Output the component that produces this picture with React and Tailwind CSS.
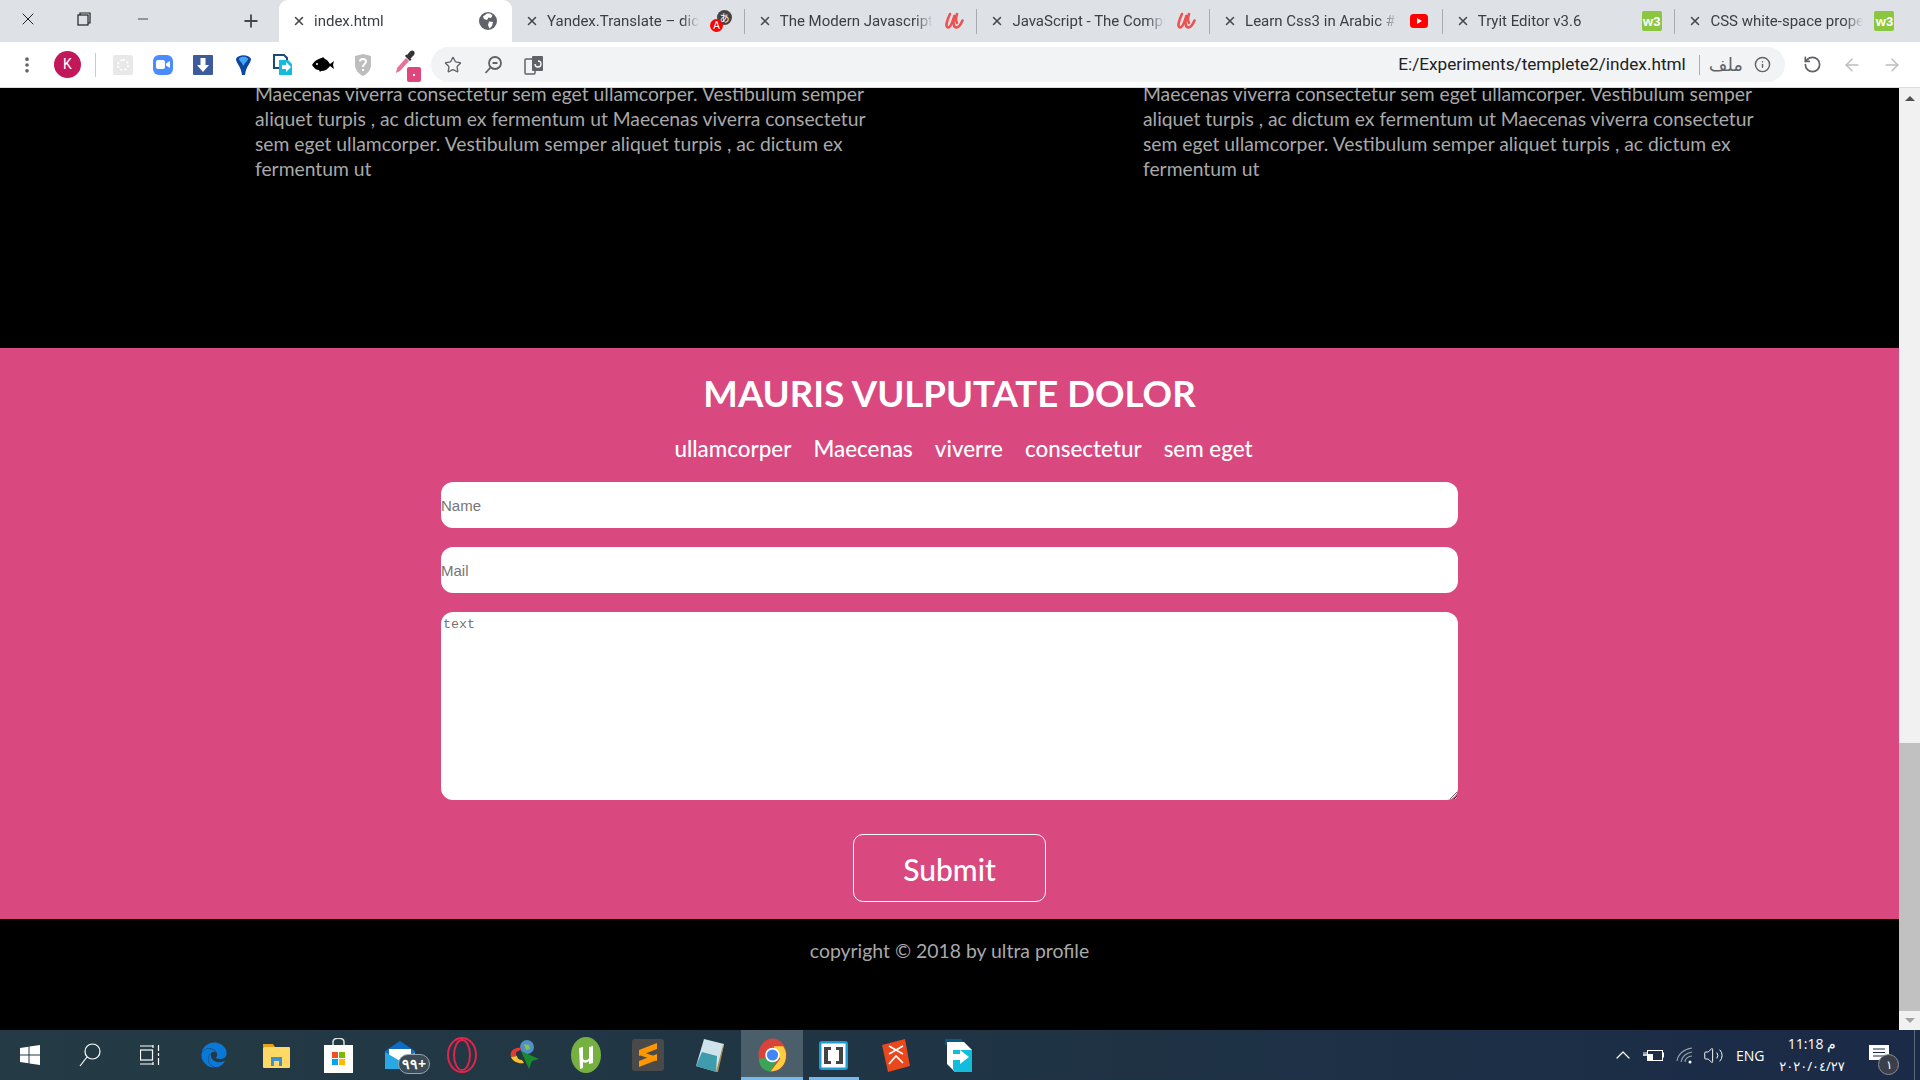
import { useState } from 'react';
import { X, Plus, Minus, Star, RotateCw, ArrowLeft, ArrowRight, Info, EllipsisVertical, ChevronUp, Volume2 } from 'lucide-react';
import { FaEdge } from 'react-icons/fa';

const bodyText =
  'Maecenas viverra consectetur sem eget ullamcorper. Vestibulum semper aliquet turpis , ac dictum ex fermentum ut Maecenas viverra consectetur sem eget ullamcorper. Vestibulum semper aliquet turpis , ac dictum ex fermentum ut';

function UdemyIcon() {
  return (
    <svg width="20" height="18" viewBox="0 0 20 18" fill="none" stroke="#ec5252" strokeWidth="2.6" strokeLinecap="round">
      <path d="M6 2C3 8 1 15 4 15.500C7 16 9 8 10.500 4" />
      <path d="M10.500 4C9 9 9 15 12 15.500C15 16 17 12 18.500 8.500" />
      <path d="M13 2C11.500 6 12 9 13 11" />
    </svg>
  );
}

function W3Icon() {
  return (
    <div className="w-[20px] h-[20px] bg-[#8cc63f] rounded-[2px] flex items-end justify-center text-white text-[13px] font-bold leading-[18px] font-['Liberation_Sans',sans-serif]">
      w3
    </div>
  );
}

function YoutubeIcon() {
  return (
    <svg width="18" height="14" viewBox="0 0 18 14">
      <rect width="18" height="14" rx="3.500" fill="#f00" />
      <path d="M7 4l5 3-5 3z" fill="#fff" />
    </svg>
  );
}

function GlobeIcon() {
  return (
    <svg width="18" height="18" viewBox="0 0 18 18">
      <circle cx="9" cy="9" r="9" fill="#5f6368" />
      <path d="M8 1.500L11 1.500L13.500 3.500L12 6L9.500 5.500L8 8L5 7L4 4.500z M10 9.500L14 10L13 14L10.500 16.500L9 13z" fill="#fff" />
    </svg>
  );
}

function TranslateFavicon() {
  return (
    <div className="relative w-[22px] h-[22px]">
      <div className="absolute right-0 top-0 w-[15px] h-[15px] rounded-full bg-[#444] text-white text-[10px] leading-[15px] text-center font-['Noto_Sans_CJK_SC',sans-serif]">
        あ
      </div>
      <div className="absolute left-0 bottom-0 w-[13px] h-[13px] rounded-full bg-[#f00] text-white text-[10px] leading-[13px] text-center font-['Liberation_Sans',sans-serif]">
        A
      </div>
    </div>
  );
}

const tabs = [
  { title: 'Yandex.Translate – dictionary', icon: <TranslateFavicon /> },
  { title: 'The Modern Javascript Bootcamp', icon: <UdemyIcon /> },
  { title: 'JavaScript - The Complete Guide', icon: <UdemyIcon /> },
  { title: 'Learn Css3 in Arabic #1 - YouTube', icon: <YoutubeIcon /> },
  { title: 'Tryit Editor v3.6', icon: <W3Icon /> },
  { title: 'CSS white-space property', icon: <W3Icon /> },
];

function Tab({ title, icon, active, last }) {
  return (
    <div
      className={
        active
          ? 'relative w-[233px] h-[42px] bg-white rounded-t-[9px] flex items-center pl-[13px] shrink-0'
          : 'relative w-[232.700px] h-[42px] flex items-center pl-[13px] shrink-0'
      }
    >
      <X size={14} strokeWidth={2.6} className="text-[#45484c] shrink-0" />
      <span className="ml-[8px] w-[153px] overflow-hidden whitespace-nowrap text-[15px] text-[#3c4043] font-['Roboto',sans-serif] [mask-image:linear-gradient(to_right,black_88%,transparent)]">
        {title}
      </span>
      <div className="w-[42px] flex justify-center shrink-0">{icon}</div>
      {!active && !last && <div className="absolute right-0 top-[9px] w-px h-[25px] bg-[#a8abaf]" />}
    </div>
  );
}

function TabStrip() {
  return (
    <div className="h-[42px] bg-[#dee1e6] flex shrink-0">
      <div className="w-[56px] flex items-center justify-center -mt-[4px]">
        <X size={20} strokeWidth={1.2} className="text-[#222]" />
      </div>
      <div className="w-[56px] flex items-center justify-center -mt-[4px]">
        <svg width="14" height="14" viewBox="0 0 14 14" fill="none" stroke="#222" strokeWidth="1.200">
          <rect x="1" y="3" width="10" height="10" fill="#dee1e6" />
          <path d="M3 3V1h10v10h-2" />
        </svg>
      </div>
      <div className="w-[62px] flex items-center justify-center -mt-[4px]">
        <Minus size={16} strokeWidth={1.2} className="text-[#222]" />
      </div>
      <div className="w-[56px]" />
      <div className="w-[42px] flex items-center justify-center">
        <Plus size={20} strokeWidth={2.2} className="text-[#45484c]" />
      </div>
      <div className="w-[7px]" />
      <Tab title="index.html" icon={<GlobeIcon />} active />
      {tabs.map((t, i) => (
        <Tab key={t.title} title={t.title} icon={t.icon} last={i === tabs.length - 1} />
      ))}
    </div>
  );
}

function ExtBox({ children }) {
  return <div className="w-[40px] h-full flex items-center justify-center shrink-0">{children}</div>;
}

function Toolbar() {
  return (
    <div className="h-[45px] bg-white flex items-center shrink-0">
      <div className="w-[54px] h-full flex items-center justify-center shrink-0">
        <EllipsisVertical size={20} strokeWidth={2.4} className="text-[#5f6368]" />
      </div>
      <div className="w-[27px] h-[27px] rounded-full bg-[#c2185b] text-white text-[14px] flex items-center justify-center shrink-0 font-['Roboto',sans-serif]">
        K
      </div>
      <div className="ml-[14px] w-px h-[24px] bg-[#c8cacc] shrink-0" />
      <div className="ml-[7px] flex h-full">
        <ExtBox>
          <div className="w-[20px] h-[20px] bg-[#e8e8e8] rounded-[2px] flex items-center justify-center">
            <div className="w-[12px] h-[12px] border-2 border-dotted border-[#fff] rounded-full" />
          </div>
        </ExtBox>
        <ExtBox>
          <div className="w-[20px] h-[20px] bg-[#4a8cff] rounded-[6px] flex items-center justify-center">
            <svg width="14" height="9" viewBox="0 0 14 9" fill="#fff">
              <rect width="9" height="9" rx="2" />
              <path d="M10 3.500L14 1v7L10 5.500z" />
            </svg>
          </div>
        </ExtBox>
        <ExtBox>
          <div className="w-[20px] h-[20px] bg-[#3b5b9c] rounded-[1px] flex items-center justify-center">
            <svg width="12" height="14" viewBox="0 0 12 14" fill="#fff">
              <path d="M3.500 0h5v7H12L6 14 0 7h3.500z" />
            </svg>
          </div>
        </ExtBox>
        <ExtBox>
          <svg width="15" height="20" viewBox="0 0 15 20">
            <path d="M0 4C2 -1 13 -1 15 4C15 8 10 11 9 20H6C5 11 0 8 0 4z" fill="#0d47a1" />
            <path d="M3 3.500C5 1 10 1 12 3.500C12 6 9 7 7.500 11C6 7 3 6 3 3.500z" fill="#42a5f5" />
          </svg>
        </ExtBox>
        <ExtBox>
          <svg width="20" height="22" viewBox="0 0 20 22" fill="none">
            <path d="M1 1h10l3 3v10H1z" stroke="#1c4a73" strokeWidth="2" fill="#fff" />
            <path d="M6 6h9l4 4v11H6z" fill="#12bcdc" />
            <path d="M9 11h4V8l5 5-5 5v-3H9z" fill="#fff" />
          </svg>
        </ExtBox>
        <ExtBox>
          <svg width="22" height="16" viewBox="0 0 22 16">
            <path d="M0 8C3 3 8 1 10 1l1-1 2 2c3 1 4 4 5 5l4-3-1 4 1 4-4-3c-2 3-5 5-9 5l-1 1-1-2C4 13 2 11 0 8z" fill="#000" />
            <circle cx="5" cy="7" r="1" fill="#fff" />
          </svg>
        </ExtBox>
        <ExtBox>
          <svg width="18" height="22" viewBox="0 0 18 22">
            <path d="M1 2L9 0l8 2v9c0 5-4 9-8 11-4-2-8-6-8-11z" fill="#bdbdbd" />
            <path d="M6 7.500C6 4 12 4 12 7.500 12 10 9 10 9 13" stroke="#fff" strokeWidth="2" fill="none" />
            <rect x="8" y="15" width="2" height="2" fill="#fff" />
          </svg>
        </ExtBox>
        <div className="relative w-[44px] h-full flex items-center justify-center shrink-0">
          <svg width="21" height="24" viewBox="0 0 21 24" className="-mt-[5px]">
            <path d="M1 23L2 18 11 8 14 11 5 21z" fill="#e57399" />
            <path d="M10 6l5 5 1.500-1.500-1-1L19 5c2-3-1-6-4-3.500L12 5l-1-.5z" fill="#333" />
          </svg>
          <div className="absolute left-[24px] top-[25px] w-[14px] h-[15px] bg-[#e0457e] rounded-[2px] flex items-center justify-center">
            <div className="w-[2px] h-[2px] bg-white" />
          </div>
        </div>
      </div>
      <div className="ml-[4px] w-[1354px] h-[35px] bg-[#f1f3f4] rounded-full flex items-center shrink-0">
        <Star size={18} strokeWidth={1.8} className="ml-[13px] text-[#5f6368]" />
        <svg width="18" height="18" viewBox="0 0 18 18" fill="none" stroke="#5f6368" strokeWidth="1.800" className="ml-[22px]">
          <circle cx="11" cy="7" r="6" />
          <path d="M6.500 11.500L1.500 17M8.500 7h5" />
        </svg>
        <svg width="20" height="20" viewBox="0 0 20 20" className="ml-[22px]">
          <rect x="1" y="4" width="10" height="15" rx="1" fill="none" stroke="#5f6368" strokeWidth="1.500" />
          <rect x="8" y="1" width="11" height="15" rx="1" fill="#5f6368" />
          <path d="M11 9a3 3 0 1 0 3-3" stroke="#fff" strokeWidth="1.300" fill="none" />
        </svg>
        <span className="ml-auto text-[17.200px] text-[#202124] font-['Roboto',sans-serif] whitespace-nowrap">
          E:/Experiments/templete2/index.html
        </span>
        <div className="ml-[13px] w-px h-[20px] bg-[#aaadb0]" />
        <span dir="rtl" className="ml-[9px] text-[18px] text-[#5f6368] font-['Noto_Sans','DejaVu_Sans',sans-serif]">
          ملف
        </span>
        <Info size={17} strokeWidth={2} className="ml-[11px] mr-[14px] text-[#5f6368]" />
      </div>
      <RotateCw size={19} strokeWidth={2.2} className="ml-[18px] text-[#5f6368] -scale-x-100" />
      <ArrowLeft size={20} strokeWidth={1.8} className="ml-[20px] text-[#babcbe]" />
      <ArrowRight size={20} strokeWidth={1.8} className="ml-[20px] text-[#babcbe]" />
    </div>
  );
}

function Scrollbar() {
  return (
    <div className="w-[21px] bg-[#f1f1f1] flex flex-col items-center shrink-0">
      <div className="h-[21px] flex items-center justify-center">
        <div className="w-0 h-0 border-x-[5px] border-x-transparent border-b-[5px] border-b-[#505050]" />
      </div>
      <div className="flex-1 w-full flex flex-col justify-end">
        <div className="h-[268px] bg-[#c1c1c1]" />
      </div>
      <div className="h-[19px] flex items-center justify-center">
        <div className="w-0 h-0 border-x-[5px] border-x-transparent border-t-[5px] border-t-[#a3a3a3]" />
      </div>
    </div>
  );
}

function Page() {
  const [name, setName] = useState('');
  const [mail, setMail] = useState('');
  const [text, setText] = useState('');
  const comic = "font-['Lato','Open_Sans',sans-serif]";

  return (
    <div className={`flex-1 min-w-0 overflow-hidden bg-black ${comic}`}>
      <section className="h-[260px] overflow-hidden">
        <div className="flex -mt-[7px] pl-[255px] gap-[268px]">
          <p className="w-[620px] text-[19.300px] leading-[25px] text-[#a9a9a9]">{bodyText}</p>
          <p className="w-[620px] text-[19.300px] leading-[25px] text-[#a9a9a9]">{bodyText}</p>
        </div>
      </section>

      <section className="h-[571px] bg-[#d9487f] flex flex-col items-center pt-[20px]">
        <h2 className="text-[36.600px] leading-[50px] font-bold text-white">MAURIS VULPUTATE DOLOR</h2>
        <ul className="flex gap-[22px] mt-[16px] ml-[28px] text-[22.400px] leading-[30px] font-medium text-white">
          <li>ullamcorper</li>
          <li>Maecenas</li>
          <li>viverre</li>
          <li>consectetur</li>
          <li>sem eget</li>
        </ul>
        <form className="w-[1017px] flex flex-col gap-[19px] mt-[18px]" onSubmit={(e) => e.preventDefault()}>
          <input
            value={name}
            onChange={(e) => setName(e.target.value)}
            placeholder="Name"
            className="h-[46px] bg-white rounded-[12px] text-[15px] font-['Liberation_Sans',sans-serif] placeholder:text-[#757575] outline-none"
          />
          <input
            value={mail}
            onChange={(e) => setMail(e.target.value)}
            placeholder="Mail"
            className="h-[46px] bg-white rounded-[12px] text-[15px] font-['Liberation_Sans',sans-serif] placeholder:text-[#757575] outline-none"
          />
          <textarea
            value={text}
            onChange={(e) => setText(e.target.value)}
            placeholder="text"
            className="h-[188px] bg-white rounded-[12px] px-[2px] pt-[3px] text-[13.300px] font-['Liberation_Mono',monospace] placeholder:text-[#757575] outline-none"
          />
          <button className="mt-[15px] pt-[2px] self-center w-[193px] h-[68px] border border-white rounded-[10px] text-[30px] font-medium text-white">
            Submit
          </button>
        </form>
      </section>

      <footer className="h-[111px] pt-[18px] text-center text-[19.400px] leading-[28px] text-[#a9a9a9]">
        copyright © 2018 by ultra profile
      </footer>
    </div>
  );
}

function TaskItem({ children, active, underline }) {
  return (
    <div className={active ? 'relative w-[62px] h-full flex items-center justify-center bg-[#4b5f6b] shrink-0' : 'relative w-[62px] h-full flex items-center justify-center shrink-0'}>
      {children}
      {(active || underline) && (
        <div className={active ? 'absolute bottom-0 inset-x-0 h-[3px] bg-[#76b9ed]' : 'absolute bottom-0 inset-x-[6px] h-[3px] bg-[#76b9ed]'} />
      )}
    </div>
  );
}

function Taskbar() {
  return (
    <div className="h-[50px] bg-linear-to-r from-[#243b45] via-[#1f3444] to-[#1b2a47] flex items-center shrink-0 text-white font-['Open_Sans',sans-serif]">
      <div className="w-[60px] h-full flex items-center justify-center shrink-0">
        <svg width="20" height="20" viewBox="0 0 20 20" fill="#fff">
          <path d="M0 3l8.500-1.200V9.500H0zM9.500 1.600L20 0v9.500H9.500zM0 10.500h8.500v7.700L0 17zM9.500 10.500H20V20L9.500 18.400z" />
        </svg>
      </div>
      <div className="w-[60px] h-full flex items-center justify-center shrink-0">
        <svg width="22" height="24" viewBox="0 0 22 24" fill="none" stroke="#fff" strokeWidth="1.200">
          <circle cx="13.500" cy="8.500" r="7.500" />
          <path d="M8 14L1 23" />
        </svg>
      </div>
      <div className="w-[60px] h-full flex items-center justify-center shrink-0">
        <svg width="20" height="20" viewBox="0 0 20 20" fill="none" stroke="#fff" strokeWidth="1.200">
          <path d="M0 1h13M13 0v3M0 19h13M13 20v-3" />
          <rect x="0.500" y="5" width="12" height="10" />
          <path d="M18.500 0v6M18.500 8v3M18.500 13v7" />
        </svg>
      </div>
      <div className="w-[3px]" />
      <TaskItem>
        <FaEdge size={26} className="text-[#0a78d7]" />
      </TaskItem>
      <TaskItem>
        <svg width="27" height="25" viewBox="0 0 27 25">
          <path d="M0 1h10l2 3H0z" fill="#e3a21a" />
          <rect y="4" width="27" height="21" rx="1" fill="#ffd966" />
          <path d="M8 14h11v9h-3v-5h-5v5H8z" fill="#3f90d1" />
        </svg>
      </TaskItem>
      <TaskItem>
        <svg width="29" height="35" viewBox="0 0 29 35">
          <path d="M9 8V4c0-5 11-5 11 0v4" fill="none" stroke="#ddd" strokeWidth="1.500" />
          <rect y="7" width="29" height="28" fill="#fff" />
          <rect x="8" y="14" width="6" height="6" fill="#f25022" />
          <rect x="15" y="14" width="6" height="6" fill="#7fba00" />
          <rect x="8" y="21" width="6" height="6" fill="#00a4ef" />
          <rect x="15" y="21" width="6" height="6" fill="#ffb900" />
        </svg>
      </TaskItem>
      <TaskItem>
        <svg width="30" height="28" viewBox="0 0 30 28">
          <path d="M0 10L15 0l15 10v18H0z" fill="#0e6cc4" />
          <path d="M4 8h22v7L15 21 4 15z" fill="#fff" />
          <path d="M0 11l15 9 15-9v17H0z" fill="#29a8e6" />
        </svg>
        <div className="absolute left-[29px] top-[24px] w-[32px] h-[20px] rounded-full bg-[#3b4c57] border border-[#9aa5ac] text-[14px] leading-[17px] text-center font-bold">
          ٩٩+
        </div>
      </TaskItem>
      <TaskItem>
        <svg width="30" height="36" viewBox="0 0 30 36" fill="none" stroke="#e0244c" strokeWidth="2">
          <ellipse cx="15" cy="18" rx="14" ry="17" />
          <ellipse cx="15" cy="18" rx="8" ry="15" />
        </svg>
      </TaskItem>
      <TaskItem>
        <svg width="30" height="32" viewBox="0 0 30 32">
          <circle cx="18" cy="8" r="7" fill="#4f8fca" />
          <path d="M15 5l5 1 1 4-4 1z" fill="#8bc34a" />
          <path d="M2 18C0 12 6 8 12 9l-2 3C7 12 6 15 8 17z" fill="#e53935" />
          <path d="M2 18c2 5 8 7 13 6l-2-3c-3 0-5-2-5-4z" fill="#fbc02d" />
          <path d="M12 12l18 8-7 2-3 8z" fill="#1b8a2d" />
        </svg>
      </TaskItem>
      <TaskItem>
        <svg width="30" height="36" viewBox="0 0 30 36">
          <ellipse cx="15" cy="18" rx="15" ry="18" fill="#76b041" />
          <path d="M8 11l4-1v11c0 3 5 3 6 0v-11l4-1v17l-4 1v-3c-2 2-4 2-6 1v6l-3 1z" fill="#fff" />
        </svg>
      </TaskItem>
      <TaskItem>
        <div className="w-[32px] h-[32px] bg-[#4a4a4a] rounded-[3px] flex items-center justify-center">
          <svg width="18" height="24" viewBox="0 0 18 24" fill="#ff9800">
            <path d="M18 0v6L0 13V7zM18 11v6L0 24v-6zM0 8l18 6v4L0 12z" />
          </svg>
        </div>
      </TaskItem>
      <TaskItem>
        <svg width="28" height="33" viewBox="0 0 28 33">
          <path d="M8 0l20 5-7 28L0 27z" fill="#cfe3ea" />
          <path d="M0 27l6-14 15 4-1 16z" fill="#3f9cad" />
          <path d="M27 6l1 0-6 27h-2z" fill="#a88a4a" />
        </svg>
      </TaskItem>
      <TaskItem active>
        <svg width="29" height="34" viewBox="-15 -17.500 30 35">
          <ellipse rx="14.500" ry="17" fill="#d9443a" />
          <path d="M-14 4C-14 14-7 17-2 17L5 5-7 3z" fill="#3ba456" />
          <path d="M-2 17C8 17 14 10 14 0 14-3 13-6 11-9H1L8 4z" fill="#fbcd3f" />
          <circle r="7.500" fill="#fff" />
          <circle r="5.800" fill="#4285f4" />
        </svg>
      </TaskItem>
      <TaskItem underline>
        <svg width="29" height="29" viewBox="0 0 29 29" className="-ml-[2px]">
          <rect width="29" height="29" rx="3" fill="#1f9ad9" />
          <rect x="2.500" y="2.500" width="24" height="24" fill="#fff" />
          <path d="M5 6h7v3H9v11h3v3H5zM24 6h-7v3h3v11h-3v3h7z" fill="#444" />
        </svg>
      </TaskItem>
      <TaskItem>
        <svg width="28" height="33" viewBox="0 0 28 33">
          <path d="M0 6L23 0l5 27-22 6z" fill="#e8481c" />
          <path d="M7 7l14 8M21 7L7 15M7 25l7-8 7 7" stroke="#fff" strokeWidth="1.600" fill="none" />
        </svg>
      </TaskItem>
      <TaskItem>
        <svg width="27" height="33" viewBox="0 0 27 33">
          <path d="M0 0h16l5 6H0z" fill="#0c5c86" />
          <path d="M2 3h17l8 8v22H10l-8-8z" fill="#fff" />
          <path d="M8 11h19v22H10l-2-3z" fill="#12bcdc" />
          <path d="M6 15h9v-4l9 7-9 7v-4H6z" fill="#fff" />
        </svg>
      </TaskItem>
      <div className="ml-auto flex items-center h-full">
        <ChevronUp size={24} strokeWidth={1.2} className="text-white" />
        <svg width="21" height="14" viewBox="0 0 21 14" fill="none" stroke="#fff" strokeWidth="1" className="ml-[8px]">
          <rect x="4.500" y="2.500" width="15" height="10" />
          <rect x="5" y="6" width="5" height="6" fill="#fff" stroke="none" />
          <path d="M1 4v4M3 4v4M0 7h4" />
          <rect x="20" y="5" width="1" height="4" fill="#fff" />
        </svg>
        <svg width="17" height="17" viewBox="0 0 17 17" fill="none" stroke="#9aa4ae" strokeWidth="1.100" className="ml-[12px]">
          <path d="M1 14C2 7 8 2 16 1M5 15C6 10 10 6 16 5M9 15c0-3 3-6 7-6" />
          <circle cx="14" cy="15" r="1.500" fill="#fff" stroke="none" />
        </svg>
        <Volume2 size={21} strokeWidth={1.1} className="ml-[10px] text-white" />
        <span className="ml-[12px] text-[14px] w-[36px]">ENG</span>
        <div className="ml-[4px] w-[72px] flex flex-col items-center text-[14px] leading-[23px]">
          <span dir="ltr">11:18 م</span>
          <span dir="ltr" className="text-[13px] font-['Noto_Sans','DejaVu_Sans',sans-serif]">٢٠٢٠/٠٤/٢٧</span>
        </div>
        <div className="relative ml-[10px] w-[42px] h-full flex items-center justify-center">
          <svg width="20" height="18" viewBox="0 0 20 18" className="-mt-[3px]">
            <path d="M0 0h20v15H0z" fill="#fff" />
            <path d="M4 4h12M4 7.500h12M4 11h12" stroke="#1b2a47" strokeWidth="1" />
          </svg>
          <div className="absolute left-[20px] top-[24px] w-[21px] h-[21px] rounded-full bg-[#3a3f4a] border border-[#8a8f98] text-[12px] leading-[19px] text-center">
            ١
          </div>
        </div>
        <div className="ml-[14px] mr-[5px] w-px h-full bg-[#5a6a7a]" />
      </div>
    </div>
  );
}

export default function App() {
  return (
    <div className="w-[1920px] h-[1080px] flex flex-col overflow-hidden bg-white">
      <TabStrip />
      <Toolbar />
      <div className="h-px bg-[#dadce0] shrink-0" />
      <div className="flex flex-1 min-h-0">
        <Page />
        <Scrollbar />
      </div>
      <Taskbar />
    </div>
  );
}
